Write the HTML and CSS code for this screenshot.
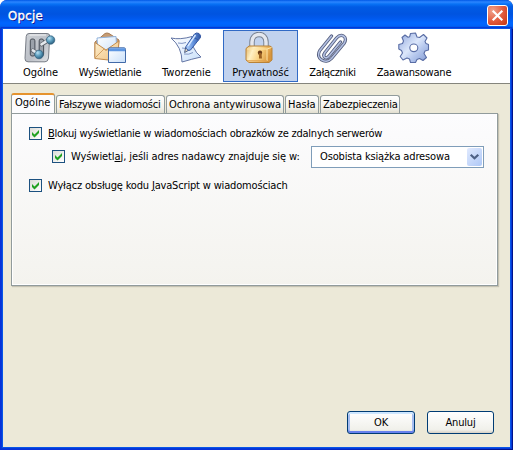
FILE: index.html
```html
<!DOCTYPE html>
<html lang="pl">
<head>
<meta charset="utf-8">
<title>Opcje</title>
<link rel="stylesheet" href="styles.css">
</head>
<body>
<div class="window">
  <header class="titlebar">
    <span class="title">Opcje</span>
    <button class="close" aria-label="Zamknij"><svg width="19" height="19" viewBox="0 0 19 19"><path d="M4.7 4.7 14.3 14.3M14.3 4.7 4.7 14.3" stroke="#fff" stroke-width="2.1"/></svg></button>
  </header>
  <div class="client">
    <nav class="toolbar">
      <div class="tool t1">
        <svg width="32" height="32" viewBox="0 0 32 32">
          <defs>
            <linearGradient id="steel" x1="0" y1="0" x2="1" y2="1"><stop offset="0" stop-color="#cdd1d6"/><stop offset=".55" stop-color="#bcc0c7"/><stop offset="1" stop-color="#e0e2e5"/></linearGradient>
            <radialGradient id="ball" cx=".35" cy=".3" r=".75"><stop offset="0" stop-color="#b9e0f2"/><stop offset=".5" stop-color="#5b9dbd"/><stop offset="1" stop-color="#285a7a"/></radialGradient>
          </defs>
          <path d="M5 1.5H23Q26 1.5 25.7 4.5L24.5 26Q24 29.8 21 29.8H4Q.8 29.8 1 26.5L2.2 4.5Q2.4 1.5 5 1.5Z" fill="url(#steel)" stroke="#777c85"/>
          <path d="M5.5 3H22" stroke="#fff" opacity=".8"/>
          <rect x="6.3" y="7" width="4.6" height="17" rx="1.8" fill="#9ba1aa" stroke="#484e57"/>
          <rect x="15.2" y="7" width="4.4" height="17" rx="1.8" fill="#9ba1aa" stroke="#484e57"/>
          <path d="M17.5 12.5 25 8M8.8 18.5 14 22" stroke="#5b616a" stroke-width="4" stroke-linecap="round"/>
          <path d="M17.5 12.3 25 7.7M8.8 18.3 14 21.8" stroke="#e6e9ed" stroke-width="2.6" stroke-linecap="round"/>
          <circle cx="26.6" cy="8" r="4.2" fill="url(#ball)" stroke="#315f7b" stroke-width=".7"/>
          <circle cx="15" cy="22.5" r="4.3" fill="url(#ball)" stroke="#315f7b" stroke-width=".7"/>
        </svg><span>Ogólne</span>
      </div>
      <div class="tool t2">
        <svg width="32" height="32" viewBox="0 0 32 32">
          <defs><linearGradient id="env" x1="0" y1="0" x2="1" y2="1"><stop offset="0" stop-color="#fff1d1"/><stop offset="1" stop-color="#efbf7c"/></linearGradient>
          <linearGradient id="pane" x1="0" y1="0" x2="1" y2="1"><stop offset="0" stop-color="#fff"/><stop offset="1" stop-color="#c9e0fa"/></linearGradient></defs>
          <path d="M1 10 11 1.5Q13 .5 15 1.5L25 8 23 28 1 25Z" fill="#c79c73" stroke="#a57b56"/>
          <path d="M3 6 22 4.5 23 22 4 20Z" fill="url(#pane)" stroke="#91b4de"/>
          <path d="M1 10.5 12 18 25 9 23.5 29 .8 26.5Z" fill="url(#env)" stroke="#c18a4c"/>
          <path d="M1 26 10 17 12 18.5 15 17 23 28" fill="none" stroke="#d4a163"/>
          <path d="M14.5 17Q14.5 15.8 16 15.8H30Q31.5 15.8 31.5 17.3V30.5H14.5Z" fill="url(#pane)" stroke="#426aa8"/>
          <path d="M15 17.8H31" stroke="#5d96e2" stroke-width="3"/>
        </svg><span>Wyświetlanie</span>
      </div>
      <div class="tool t3">
        <svg width="32" height="32" viewBox="0 0 32 32">
          <defs><linearGradient id="pen" x1="0" y1="0" x2="1" y2="0"><stop offset="0" stop-color="#b6d5fb"/><stop offset=".5" stop-color="#6393df"/><stop offset="1" stop-color="#2f539f"/></linearGradient></defs>
          <path d="M1 6Q10 8 22 4.5Q21 17 31 25Q22 27 12 30Q12 15 1 6Z" fill="url(#pane)" stroke="#6476a5"/>
          <path d="M8 11Q12 12 16 10.5M12 16Q15 17 18 15.5M14 22Q19 23 23 20.5" fill="none" stroke="#8297c5"/>
          <path d="M14.6 20.5 15.8 15 19 18Z" fill="#f7e4c1" stroke="#3c4f78" stroke-width=".9"/>
          <path d="M16 14.5 24.5 2Q26.5 .2 29 1.5 31.3 3.3 30.5 5.5L20.5 18Q19 19 17 17.5 15.3 16 16 14.5Z" fill="url(#pen)" stroke="#3558a4"/>
          <path d="M23 5 28.5 8" stroke="#365aa4"/><path d="M18 14 25.5 3" stroke="#d9eaff" stroke-width="1.4"/>
        </svg><span>Tworzenie</span>
      </div>
      <div class="tool t4 selected">
        <svg width="32" height="32" viewBox="0 0 32 32">
          <defs><linearGradient id="gold" x1="0" y1="0" x2="1" y2=".25"><stop offset="0" stop-color="#e2b362"/><stop offset=".3" stop-color="#fff0c4"/><stop offset=".65" stop-color="#f8ce7c"/><stop offset="1" stop-color="#d8953c"/></linearGradient></defs>
          <path d="M8 17V10C8 0 22 0 22 10V16" fill="none" stroke="#77808f" stroke-width="5.4"/>
          <path d="M8 17V10C8 0 22 0 22 10V16" fill="none" stroke="#e4e7ee" stroke-width="3.5"/>
          <path d="M2 16.5 5 14H26L28 15.5V28L25 30.5H5L2 28Z" fill="url(#gold)" stroke="#b98237"/>
          <path d="M3 17H23L27.5 15.5M23 17V29" fill="none" stroke="#ffe6a9"/>
          <path d="M3 28.8H23" stroke="#e0a04c" stroke-width="1.2"/>
          <circle cx="16" cy="20.8" r="2.2" fill="#6d3d18"/><path d="M15 21H17.5L18 26.5H15Z" fill="#9c6122"/>
        </svg><span>Prywatność</span>
      </div>
      <div class="tool t5">
        <svg width="32" height="32" viewBox="0 0 32 32" fill="none" stroke-linecap="round" stroke-linejoin="round">
          <path d="M24.5 10 13.5 23.5C10 28 6 25 9 20.5L20.5 6C25.5 .5 32.5 5 28 11.5L15.5 26.5C9.5 33 -1 26.5 3.8 18.5L15.5 4" stroke="#555e7d" stroke-width="3.3"/>
          <path d="M24.5 10 13.5 23.5C10 28 6 25 9 20.5L20.5 6C25.5 .5 32.5 5 28 11.5L15.5 26.5C9.5 33 -1 26.5 3.8 18.5L15.5 4" stroke="#b3c0e2" stroke-width="1.6"/>
        </svg><span>Załączniki</span>
      </div>
      <div class="tool t6">
        <svg width="32" height="32" viewBox="0 0 32 32">
          <defs><linearGradient id="gear" x1="0" y1="0" x2="1" y2="1"><stop offset="0" stop-color="#91a7dc"/><stop offset=".45" stop-color="#dce7fb"/><stop offset=".65" stop-color="#b5c7ed"/><stop offset="1" stop-color="#7f98d2"/></linearGradient></defs>
          <path fill-rule="evenodd" d="M12.5 1.5 17.5 1 19 5 21.5 5.5 25.5 2.5 29 6 27 9.5 28 11.5 30.5 12.5V18L27 19 26 21.5 28.5 25.5 25 28.5 21.5 26.5 19 27.5 17.5 30.5H12.5L11.5 27 9 26 5 28 2.2 24.5 4.5 21 3.5 18.5 .8 17V12.5L4.5 11.5 5.5 9 4 5.5 7 3 10 5.3 11.7 4.7Z M15.8 12A4 3.8 0 1 0 15.8 19.6 4 3.8 0 1 0 15.8 12Z" fill="url(#gear)" stroke="#596da5" stroke-width="1.1" stroke-linejoin="round"/>
        </svg><span>Zaawansowane</span>
      </div>
    </nav>
    <main class="content">
      <div class="tabs">
        <div class="tab active"><span>Ogólne</span></div>
        <div class="tab b2"><span>Fałszywe wiadomości</span></div>
        <div class="tab b3"><span>Ochrona antywirusowa</span></div>
        <div class="tab b4"><span>Hasła</span></div>
        <div class="tab b5"><span>Zabezpieczenia</span></div>
      </div>
      <section class="panel">
        <div class="row r1"><i class="check"><svg width="11" height="11" viewBox="0 0 11 11"><path d="M2 4 4.5 6.5 9 2V5L4.5 9.5 2 7Z" fill="#21a121"/></svg></i><span class="l1"><u>B</u>lokuj wyświetlanie w wiadomościach obrazków ze zdalnych serwerów</span></div>
        <div class="row r2"><i class="check"><svg width="11" height="11" viewBox="0 0 11 11"><path d="M2 4 4.5 6.5 9 2V5L4.5 9.5 2 7Z" fill="#21a121"/></svg></i><span class="l2">Wyświetl<u>a</u>j, jeśli adres nadawcy znajduje się w:</span>
          <div class="select"><span>Osobista książka adresowa</span><b class="arrow"><svg width="15" height="17" viewBox="0 0 15 17"><path d="M3.7 6.7 7.5 10.3 11.3 6.7" fill="none" stroke="#4d6185" stroke-width="2.2"/></svg></b></div></div>
        <div class="row r3"><i class="check"><svg width="11" height="11" viewBox="0 0 11 11"><path d="M2 4 4.5 6.5 9 2V5L4.5 9.5 2 7Z" fill="#21a121"/></svg></i><span class="l3">Wyłącz obsługę kodu <u>J</u>avaScript w wiadomościach</span></div>
      </section>
      <footer class="actions"><button class="btn default">OK</button><button class="btn cancel">Anuluj</button></footer>
    </main>
  </div>
</div>
</body>
</html>
```
FILE: styles.css
```css
* { box-sizing: border-box; }
body { margin: 0; background: #fff; font: 11px/13px "DejaVu Sans Condensed", "DejaVu Sans", sans-serif; font-stretch: condensed; color: #000; }
svg { display: block; flex: none; }
span { white-space: nowrap; }
button { font: inherit; padding: 0; }
.window { width: 513px; height: 450px; display: flex; flex-direction: column; overflow: hidden; border-radius: 7px 7px 0 0; background: linear-gradient(90deg, #0831d9 50%, #00138c 100%); }
.titlebar { height: 29px; flex: none; display: flex; align-items: center; justify-content: space-between; padding: 2px 5px 0 8px; background: linear-gradient(#0058e6 0, #2b85ff 2px, #0872f5 4px, #005be5 7px, #0054e0 14px, #0058ec 18px, #0066ff 23px, #0062f8 26px, #0040bd 29px); }
.title { color: #fff; font: 13px/16px "DejaVu Sans Condensed", "DejaVu Sans", sans-serif; font-stretch: condensed; -webkit-text-stroke: .4px #fff; text-shadow: 1px 1px #0f1089; letter-spacing: .3px; }
.close { width: 21px; height: 21px; border: 1px solid #fff; border-radius: 3px; background: radial-gradient(circle at 25% 25%, #f0a18b, #e1583a 55%, #c43513); }
.client { flex: 1; display: flex; flex-direction: column; margin: 0 3px 3px; background: #ece9d8; box-shadow: 0 0 0 1px #0855e8, 0 0 0 2px #0539d8; }
.toolbar { height: 55px; flex: none; display: flex; background: #fff; border-bottom: 1px solid #85857d; padding: 1px 0 1px 11px; gap: 3px; }
.tool { display: flex; flex-direction: column; align-items: center; padding-top: 1px; border: 1px solid transparent; height: 52px; }
.tool svg { margin: 0 1px 2px 0; }
.t1 { width: 53px; }
.t1 svg { margin-right: 2px; }
.t2 { width: 80px; letter-spacing: -.22px; }
.t3 { width: 67px; }
.t4 { width: 75px; }
.t5 { width: 63px; letter-spacing: -.35px; }
.t6 { width: 94px; letter-spacing: -.2px; }
.selected { background: #c1d2ee; border-color: #316ac5; }
.content { flex: 1; display: flex; flex-direction: column; padding: 9px 12px 13px 8px; }
.tabs { display: flex; align-items: flex-end; height: 20px; gap: 1px; }
.tab { height: 18px; border: 1px solid #919b9c; border-bottom: 0; border-radius: 3px 3px 0 0; background: linear-gradient(#fff, #f2f1ea 70%, #e2dfd0); padding: 2px 0 0 2px; }
.active { width: 44px; height: 20px; border-top: 2px solid #e5932f; background: #fcfcfe; padding: 1px 0 0 3px; }
.b2 { width: 109px; letter-spacing: -.2px; }
.b3 { width: 118px; letter-spacing: -.08px; }
.b4 { width: 34px; }
.b5 { width: 80px; letter-spacing: -.2px; }
.panel { width: 487px; height: 173px; border: 1px solid #919b9c; background: linear-gradient(#fcfcfe, #f4f3ee); box-shadow: inset 1px 0 #fff, inset -1px -1px #fff, 1px 1px 1px #c5c2b2; padding: 9px 13px 0 17px; display: flex; flex-direction: column; }
.row { display: flex; align-items: center; height: 21px; }
.r2 { margin: 1px 0 0 23px; height: 23px; }
.r3 { margin-top: 7px; }
.check { width: 13px; height: 13px; flex: none; border: 1px solid #1c5180; background: linear-gradient(135deg, #dcdcd7, #fff); margin-right: 6px; }
.l1 { letter-spacing: -.245px; }
.l2 { width: 241px; letter-spacing: -.08px; }
.l3 { letter-spacing: -.17px; }
.select { width: 173px; height: 22px; flex: none; border: 1px solid #7f9db9; background: #fff; display: flex; align-items: center; padding: 0 1px 0 8px; letter-spacing: -.15px; }
.arrow { margin-left: auto; width: 15px; height: 18px; border-radius: 2px; background: linear-gradient(135deg, #e1eafe, #aec8f7); }
.actions { display: flex; justify-content: flex-end; gap: 12px; margin: auto 4px 0 0; }
.btn { width: 68px; height: 23px; border: 1px solid #003c74; border-radius: 3px; background: linear-gradient(#fff, #f0f0ea 85%, #d6d0c5); letter-spacing: -.15px; }
.cancel { width: 67px; }
.default { box-shadow: inset 0 -2px #6982ee, inset 0 2px #cee7ff, inset 2px 0 #a5bdf0, inset -2px 0 #a5bdf0; }
```
